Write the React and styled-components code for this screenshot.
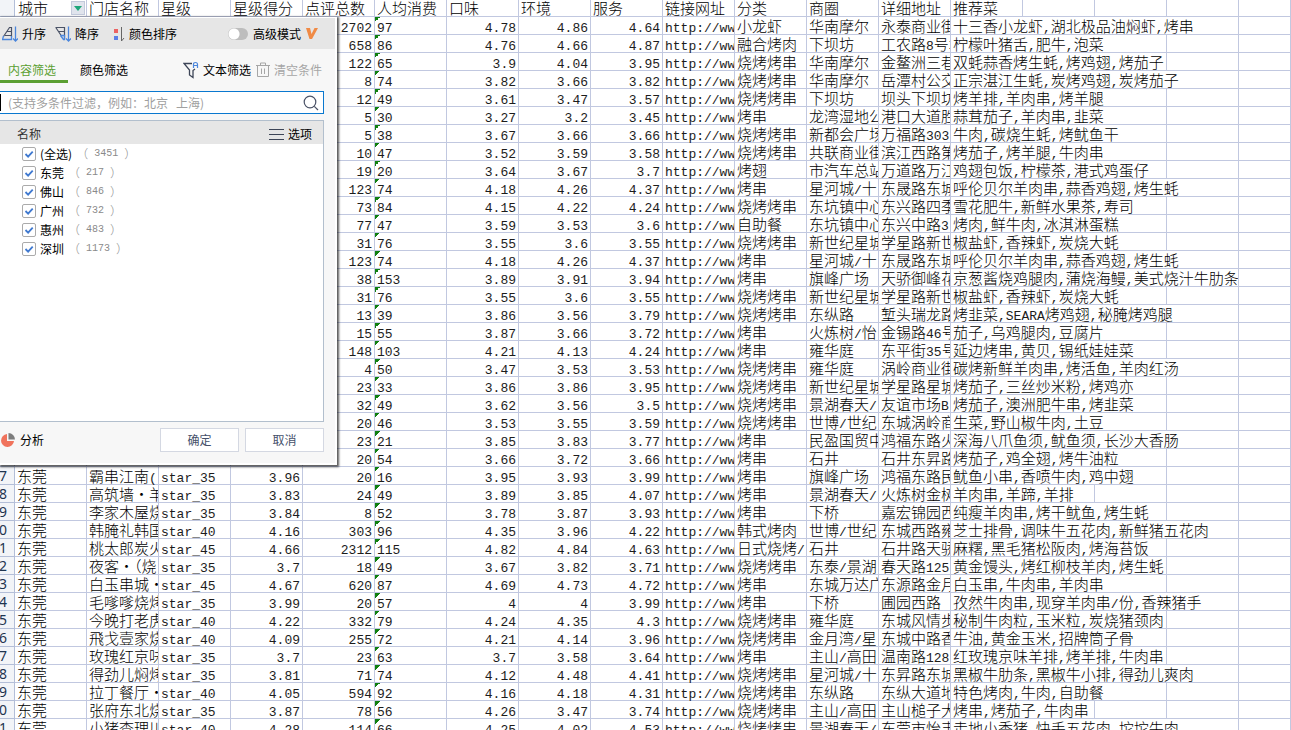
import React, { useState } from "react";
import styled, { createGlobalStyle } from "styled-components";

const GlobalStyle = createGlobalStyle`
  * {
    box-sizing: border-box;
  }
  body {
    margin: 0;
    background: #fff;
    overflow: hidden;
  }
  button, input {
    font: inherit;
    color: inherit;
  }
`;

const Sheet = styled.main`
  position: relative;
  height: 100vh;
  overflow: hidden;
  color: #000;
  font-family: "Noto Sans CJK SC", sans-serif;
  font-size: 15px;
  font-weight: 300;
`;
const Grid = styled.table`
  width: 100%;
  table-layout: fixed;
  border-collapse: separate;
  border-spacing: 0;
`;
const Col = styled.col`
  width: ${props => (props.$head ? "15px" : props.$rest ? "auto" : "72px")};
`;
const Row = styled.tr`
  height: ${props => (props.$first ? "17px" : "18px")};
`;
const cellBase = `
  padding: 0;
  border-right: 1px solid #c1c8e0;
  border-bottom: 1px solid #c1c8e0;
  font-weight: inherit;
  vertical-align: top;
`;
const HeadCell = styled.th`
  ${cellBase}
  text-align: left;
`;
const Cell = styled.td`
  ${cellBase}
  text-align: ${props => (props.$num ? "right" : "left")};
`;
const MarkedCell = styled(Cell)`
  background: linear-gradient(135deg, #108010 50%, transparent 50%) no-repeat
    0 0 / 5px 5px;
`;
const RowHead = styled.th`
  ${cellBase}
  background: #f2f4f8;
  border-color: #b3bed8;
`;
const Content = styled.div`
  height: ${props => (props.$first ? "16px" : "17px")};
  padding: 0 2px;
  line-height: ${props => (props.$first ? "16px" : "17px")};
  white-space: nowrap;
  overflow-x: clip;
  overflow-y: visible;
`;
const RowNumber = styled.div`
  display: flex;
  justify-content: flex-end;
  height: 17px;
  padding-right: 7px;
  color: #1f3550;
  font-family: "Noto Sans", sans-serif;
  font-size: 14px;
  font-weight: 400;
  line-height: 17px;
`;
const Ascii = styled.span`
  color: #1c1c1c;
  font-family: "Liberation Mono", monospace;
  font-size: 13px;
  line-height: 1px;
`;
const FilterHead = styled(Content)`
  display: flex;
  align-items: center;
  justify-content: space-between;
  padding: 0 1px 0 3px;
`;
const FilterButton = styled.button`
  display: flex;
  align-items: center;
  justify-content: center;
  flex: none;
  width: 14px;
  height: 14px;
  padding: 0;
  border: 1px solid #c3cadb;
  background: #e0e4ed;
`;

const Panel = styled.section`
  position: absolute;
  top: 17px;
  left: 0;
  display: flex;
  flex-direction: column;
  width: 337px;
  height: 448px;
  background: #f7f7f7;
  border: 1px solid #fff;
  border-width: 1px 2px 2px 0;
  box-shadow: 1px 1px 2px 1px rgba(0, 0, 0, 0.65);
  font-size: 12px;
  font-weight: 400;
  line-height: 16px;
`;
const Toolbar = styled.div`
  display: flex;
  align-items: center;
  height: 31px;
  flex: none;
  padding: 0 17px 0 2px;
  background: #e6e6e6;
`;
const ToolButton = styled.button`
  display: flex;
  align-items: center;
  gap: 4px;
  padding: 0;
  margin-right: ${props => props.$gap || 0}px;
  border: none;
  background: none;
  color: ${props => (props.$muted ? "#a6a6a6" : "#000")};
  white-space: nowrap;
`;
const Advanced = styled.label`
  display: flex;
  align-items: center;
  gap: 5px;
  margin-left: auto;
`;
const Switch = styled.input`
  appearance: none;
  width: 20px;
  height: 12px;
  margin: 0;
  border-radius: 6px;
  background: radial-gradient(circle at 6px 6px, #fff 5px, #bdbdbd 6px);
`;
const TabBar = styled.div`
  display: flex;
  align-items: center;
  height: 34px;
  flex: none;
  padding-right: 13px;
`;
const Tab = styled.button`
  height: 34px;
  width: ${props => (props.$active ? "68px" : "72px")};
  padding: 10px 0 0 ${props => (props.$active ? "8px" : "12px")};
  border: none;
  border-bottom: 3px solid ${props => (props.$active ? "#5b9f32" : "transparent")};
  background: none;
  color: ${props => (props.$active ? "#5b9f32" : "#000")};
  text-align: left;
`;
const TabTools = styled.div`
  display: flex;
  align-items: center;
  margin-left: auto;
  padding-top: 7px;
`;
const SearchBox = styled.label`
  display: flex;
  align-items: center;
  height: 23px;
  flex: none;
  margin: 8px 11px 0 0;
  padding-right: 4px;
  border: 1px solid #0a78cf;
  border-left: none;
  background: #fff;
`;
const Caret = styled.span`
  width: 1px;
  height: 17px;
  background: #000;
`;
const SearchInput = styled.input`
  flex: 1;
  min-width: 0;
  padding: 0 0 0 7px;
  border: none;
  outline: none;
  background: none;
  &::placeholder {
    color: #a0a0a0;
    opacity: 1;
    white-space: pre;
  }
`;
const ListBox = styled.div`
  flex: 1;
  margin: 6px 11px 0 0;
  border: 1px solid #b2bfcd;
  border-left: none;
  background: #fff;
`;
const ListHead = styled.div`
  display: flex;
  align-items: center;
  justify-content: space-between;
  height: 23px;
  padding: 2px 11px 0 17px;
  background: #e6e6e6;
  color: #333;
`;
const List = styled.ul`
  margin: 0;
  padding: 0 0 0 22px;
  list-style: none;
`;
const Item = styled.label`
  display: flex;
  align-items: center;
  height: 19px;
  gap: 4px;
`;
const Tick = styled.input`
  appearance: none;
  width: 14px;
  height: 14px;
  margin: 0;
  border: 1px solid #ababab;
  border-radius: 2px;
  background: #fff;
  &:checked {
    background: #fff
      url("data:image/svg+xml,%3Csvg xmlns='http://www.w3.org/2000/svg' viewBox='0 0 12 12'%3E%3Cpath d='M2.5 6l2.6 2.6 4.6-5' fill='none' stroke='%23417ad0' stroke-width='1.8'/%3E%3C/svg%3E");
  }
`;
const Count = styled.span`
  display: flex;
  align-items: center;
  gap: 6px;
  color: #8a8a8a;
  font-weight: 300;
`;
const CountNumber = styled.span`
  font-family: "Liberation Mono", monospace;
  font-size: 10px;
`;
const Footer = styled.div`
  display: flex;
  align-items: center;
  height: 41px;
  flex: none;
  gap: 6px;
  padding: 0 11px 6px 0;
`;
const Analyse = styled(ToolButton)`
  margin-right: auto;
`;
const DialogButton = styled.button`
  width: 79px;
  height: 24px;
  padding: 0;
  border: 1px solid #d4d8e2;
  background: #fff;
  color: #45506a;
`;

const Icon = ({ w = 16, h = 18, children }) => (
  <svg width={w} height={h} viewBox={`0 0 ${w} ${h}`} fill="none" aria-hidden="true">
    {children}
  </svg>
);
const AscIcon = () => (
  <Icon>
    <path d="M1.5 11.5L7.500 2.500H9.500V12M5 6.500h4.500M3 10.500h6.500" stroke="#4a5266" strokeWidth="1.200" />
    <path d="M1.500 11l-1 3.500h9V11M13.500 1.500v14.500M11 13.500l2.500 2.500 2.500-2.500" stroke="#4b86dc" strokeWidth="1.300" />
  </Icon>
);
const DescIcon = () => (
  <Icon>
    <path d="M.5 2.500h9V14M.8 2.500l6 9M3.500 6.500h6" stroke="#4a5266" strokeWidth="1.200" />
    <path d="M5.500 10.500h4v4h-1l-3-4M13.500 1.500v14.500M11 13.500l2.500 2.500 2.500-2.500" stroke="#4b86dc" strokeWidth="1.300" />
  </Icon>
);
const ColorIcon = () => (
  <Icon w={12}>
    <path d="M1 4h4v4H1z" fill="#ec6262" />
    <path d="M1 11h4v4H1z" fill="#5b7fe6" />
    <path d="M8.500 2v14l2.500-3" stroke="#666" />
  </Icon>
);
const VipIcon = () => (
  <Icon w={12} h={12}>
    <path d="M0 0h4l1.500 6L8.500 0H12L6 11H3.500z" fill="#f08a45" />
  </Icon>
);
const FunnelIcon = () => (
  <Icon>
    <path d="M9 2.500H1l5.500 6.500v5l3.500 2.500V9.500l2-1.500" stroke="#3d4557" strokeWidth="1.300" />
    <path d="M10.500 7V3.500q0-2 2-2t2 2V7M10.500 4.500h4" stroke="#4b86dc" strokeWidth="1.200" />
  </Icon>
);
const TrashIcon = () => (
  <Icon w={14} h={16}>
    <path d="M0 3.500h14M4.500 3V1h5v2M1.500 4v10.500h11V4M5.500 6.500v5.500M8.500 6.500v5.500" stroke="#a6a6a6" />
  </Icon>
);
const SearchIcon = () => (
  <Icon w={16} h={16}>
    <circle cx="7" cy="7" r="5.800" stroke="#4a5266" strokeWidth="1.200" />
    <path d="M11.300 11.300L15 15" stroke="#4a5266" strokeWidth="1.200" />
  </Icon>
);
const MenuIcon = () => (
  <Icon w={15} h={12}>
    <path d="M0 1.500h15M0 6.500h15M0 11.500h15" stroke="#3d4557" />
  </Icon>
);
const PieIcon = () => (
  <Icon w={16} h={16}>
    <path d="M7 2v7h7A6.500 6.500 0 1 1 7 2z" fill="#f0735c" />
    <path d="M8.500 1A6.500 6.500 0 0 1 15 7.500H8.500z" fill="#7d7d7d" />
  </Icon>
);
const ArrowIcon = () => (
  <Icon w={8} h={5}>
    <path d="M0 0h8L4 5z" fill="#1fa67a" />
  </Icon>
);

const headers = ["门店名称", "星级", "星级得分", "点评总数", "人均消费", "口味", "环境", "服务", "链接网址", "分类", "商圈", "详细地址", "推荐菜"];

// store, stars, score, reviews, price, taste, setting, service, type, area, address, dishes
const rows = `
|||2702|97|4.78|4.86|4.64|小龙虾|华南摩尔|永泰商业街|十三香小龙虾,湖北极品油焖虾,烤串
|||658|86|4.76|4.66|4.87|融合烤肉|下坝坊|工农路8号坝|柠檬叶猪舌,肥牛,泡菜
|||122|65|3.9|4.04|3.95|烧烤烤串|华南摩尔|金鳌洲三巷|双蚝蒜香烤生蚝,烤鸡翅,烤茄子
|||8|74|3.82|3.66|3.82|烧烤烤串|华南摩尔|岳潭村公交|正宗湛江生蚝,炭烤鸡翅,炭烤茄子
|||12|49|3.61|3.47|3.57|烧烤烤串|下坝坊|坝头下坝坊|烤羊排,羊肉串,烤羊腿
|||5|30|3.27|3.2|3.45|烤串|龙湾湿地公|港口大道胜|蒜茸茄子,羊肉串,韭菜
|||5|38|3.67|3.66|3.66|烧烤烤串|新都会广场|万福路303|牛肉,碳烧生蚝,烤鱿鱼干
|||10|47|3.52|3.59|3.58|烧烤烤串|共联商业街|滨江西路第|烤茄子,烤羊腿,牛肉串
|||19|20|3.64|3.67|3.7|烤翅|市汽车总站|万道路万江|鸡翅包饭,柠檬茶,港式鸡蛋仔
|||123|74|4.18|4.26|4.37|烤串|星河城/十|东晟路东城|呼伦贝尔羊肉串,蒜香鸡翅,烤生蚝
|||73|84|4.15|4.22|4.24|烧烤烤串|东坑镇中心|东兴路四季|雪花肥牛,新鲜水果茶,寿司
|||77|47|3.59|3.53|3.6|自助餐|东坑镇中心|东兴中路3|烤肉,鲜牛肉,冰淇淋蛋糕
|||31|76|3.55|3.6|3.55|烧烤烤串|新世纪星城|学星路新世|椒盐虾,香辣虾,炭烧大蚝
|||123|74|4.18|4.26|4.37|烤串|星河城/十|东晟路东城|呼伦贝尔羊肉串,蒜香鸡翅,烤生蚝
|||38|153|3.89|3.91|3.94|烤串|旗峰广场|天骄御峰花|京葱酱烧鸡腿肉,蒲烧海鳗,美式烧汁牛肋条
|||31|76|3.55|3.6|3.55|烧烤烤串|新世纪星城|学星路新世|椒盐虾,香辣虾,炭烧大蚝
|||13|39|3.86|3.56|3.79|烧烤烤串|东纵路|堑头瑞龙路|烤韭菜,SEARA烤鸡翅,秘腌烤鸡腿
|||15|55|3.87|3.66|3.72|烤串|火炼树/怡|金锡路46号|茄子,乌鸡腿肉,豆腐片
|||148|103|4.21|4.13|4.24|烤串|雍华庭|东平街35号|延边烤串,黄贝,锡纸娃娃菜
|||4|50|3.47|3.53|3.53|烧烤烤串|雍华庭|涡岭商业街|碳烤新鲜羊肉串,烤活鱼,羊肉红汤
|||23|33|3.86|3.86|3.95|烧烤烤串|新世纪星城|学星路星城|烤茄子,三丝炒米粉,烤鸡亦
|||32|49|3.62|3.56|3.5|烧烤烤串|景湖春天/|友谊市场B|烤茄子,澳洲肥牛串,烤韭菜
|||20|46|3.53|3.55|3.59|烧烤烤串|世博/世纪|东城涡岭商|生菜,野山椒牛肉,土豆
|||23|21|3.85|3.83|3.77|烤串|民盈国贸中|鸿福东路火|深海八爪鱼须,鱿鱼须,长沙大香肠
|||20|54|3.66|3.72|3.66|烤串|石井|石井东昇路|烤茄子,鸡全翅,烤牛油粒
霸串江南(|star_35|3.96|20|16|3.95|3.93|3.99|烤串|旗峰广场|鸿福东路民|鱿鱼小串,香喷牛肉,鸡中翅
高筑墙•羊|star_35|3.83|24|49|3.89|3.85|4.07|烤串|景湖春天/|火炼树金树|羊肉串,羊蹄,羊排
李家木屋烧|star_35|3.84|8|52|3.78|3.87|3.93|烤串|下桥|嘉宏锦园西|纯瘦羊肉串,烤干鱿鱼,烤生蚝
韩腌礼韩国|star_40|4.16|303|96|4.35|3.96|4.22|韩式烤肉|世博/世纪|东城西路雍|芝士排骨,调味牛五花肉,新鲜猪五花肉
桃太郎炭火|star_45|4.66|2312|115|4.82|4.84|4.63|日式烧烤/|石井|石井路天骄|麻糬,黑毛猪松阪肉,烤海苔饭
夜客·（烧|star_35|3.7|18|49|3.67|3.82|3.71|烧烤烤串|东泰/景湖|春天路125|黄金馒头,烤红柳枝羊肉,烤生蚝
白玉串城·|star_45|4.67|620|87|4.69|4.73|4.72|烤串|东城万达广|东源路金月|白玉串,牛肉串,羊肉串
毛嗲嗲烧烤|star_35|3.99|20|57|4|4|3.99|烤串|下桥|圃园西路|孜然牛肉串,现穿羊肉串/份,香辣猪手
今晚打老虎|star_40|4.22|332|79|4.24|4.35|4.3|烧烤烤串|雍华庭|东城风情步|秘制牛肉粒,玉米粒,炭烧猪颈肉
飛戈壹家烧|star_40|4.09|255|72|4.21|4.14|3.96|烧烤烤串|金月湾/星|东城中路香|牛油,黄金玉米,招牌筒子骨
玫瑰红京味|star_35|3.7|23|63|3.7|3.58|3.64|烤串|主山/高田|温南路128|红玫瑰京味羊排,烤羊排,牛肉串
得劲儿焖烤|star_35|3.81|71|74|4.12|4.48|4.41|烧烤烤串|星河城/十|东昇路东城|黑椒牛肋条,黑椒牛小排,得劲儿爽肉
拉丁餐厅·|star_40|4.05|594|92|4.16|4.18|4.31|烧烤烤串|东纵路|东纵大道地|特色烤肉,牛肉,自助餐
张府东北烧|star_35|3.87|78|56|4.26|3.47|3.74|烧烤烤串|主山/高田|主山槌子大|烤串,烤茄子,牛肉串
小猪查理川|star_40|4.28|114|66|4.25|4.02|4.53|烧烤烤串|景湖春天/|东莞市怡丰|走地小香猪,快手五花肉,坨坨牛肉`
  .trim()
  .split("\n")
  .map(line => line.split("|"));

const cities = [
  ["(全选)", 3451],
  ["东莞", 217],
  ["佛山", 846],
  ["广州", 732],
  ["惠州", 483],
  ["深圳", 1173]
];

const Text = ({ children }) => (
  <Content>
    {children
      .split(/([\x20-\x7e]+)/)
      .map((part, i) => (i % 2 ? <Ascii key={i}>{part}</Ascii> : part))}
  </Content>
);

// long dish lists run over the empty columns to their right
const spanOf = text => {
  const width = [...text].reduce((sum, c) => sum + (c < "\x7f" ? 7.5 : 15), 3);
  return Math.ceil(width / 72);
};

const SheetRow = ({ values, number }) => {
  const dishes = values[11];
  const span = spanOf(dishes);
  return (
    <Row>
      <RowHead scope="row">
        <RowNumber>{number}</RowNumber>
      </RowHead>
      <Cell>
        <Text>{values[0] && "东莞"}</Text>
      </Cell>
      {values.slice(0, 11).map((value, i) => {
        const Box = i === 4 ? MarkedCell : Cell;
        return (
          <React.Fragment key={i}>
            {i === 8 && (
              <Cell>
                <Text>http://www</Text>
              </Cell>
            )}
            <Box $num={[2, 3, 5, 6, 7].includes(i)}>
              <Text>{value}</Text>
            </Box>
          </React.Fragment>
        );
      })}
      <Cell colSpan={span}>
        <Text>{dishes}</Text>
      </Cell>
      {Array.from({ length: 5 - span }, (_, i) => (
        <Cell key={i} />
      ))}
    </Row>
  );
};

const FilterPanel = () => {
  const [checked, setChecked] = useState(cities.map(() => true));
  const toggle = index =>
    setChecked(
      index === 0
        ? checked.map(() => !checked[0])
        : checked.map((value, i) => (i === index ? !value : value))
    );
  return (
    <Panel>
      <Toolbar>
        <ToolButton $gap={9}>
          <AscIcon />
          升序
        </ToolButton>
        <ToolButton $gap={14}>
          <DescIcon />
          降序
        </ToolButton>
        <ToolButton>
          <ColorIcon />
          颜色排序
        </ToolButton>
        <Advanced>
          <Switch type="checkbox" role="switch" />
          高级模式
          <VipIcon />
        </Advanced>
      </Toolbar>
      <TabBar>
        <Tab $active>内容筛选</Tab>
        <Tab>颜色筛选</Tab>
        <TabTools>
          <ToolButton $gap={5}>
            <FunnelIcon />
            文本筛选
          </ToolButton>
          <ToolButton $muted>
            <TrashIcon />
            清空条件
          </ToolButton>
        </TabTools>
      </TabBar>
      <SearchBox>
        <Caret />
        <SearchInput
          aria-label="搜索"
          placeholder="(支持多条件过滤，例如：北京   上海)"
        />
        <SearchIcon />
      </SearchBox>
      <ListBox>
        <ListHead>
          名称
          <ToolButton>
            <MenuIcon />
            选项
          </ToolButton>
        </ListHead>
        <List>
          {cities.map(([name, count], i) => (
            <li key={name}>
              <Item>
                <Tick type="checkbox" checked={checked[i]} onChange={() => toggle(i)} />
                {name}
                <Count>
                  （<CountNumber>{count}</CountNumber>）
                </Count>
              </Item>
            </li>
          ))}
        </List>
      </ListBox>
      <Footer>
        <Analyse>
          <PieIcon />
          分析
        </Analyse>
        <DialogButton>确定</DialogButton>
        <DialogButton>取消</DialogButton>
      </Footer>
    </Panel>
  );
};

const App = () => (
  <Sheet>
    <GlobalStyle />
    <Grid>
      <colgroup>
        <Col $head />
        {Array.from({ length: 17 }, (_, i) => (
          <Col key={i} />
        ))}
        <Col $rest />
      </colgroup>
      <thead>
        <Row $first>
          <RowHead />
          <HeadCell scope="col">
            <FilterHead $first>
              城市
              <FilterButton aria-label="筛选">
                <ArrowIcon />
              </FilterButton>
            </FilterHead>
          </HeadCell>
          {headers.map(title => (
            <HeadCell key={title} scope="col">
              <Content $first>{title}</Content>
            </HeadCell>
          ))}
          {[1, 2, 3, 4].map(i => (
            <Cell key={i} />
          ))}
        </Row>
      </thead>
      <tbody>
        {rows.map((values, i) => (
          <SheetRow key={i} values={values} number={i + 2} />
        ))}
      </tbody>
    </Grid>
    <FilterPanel />
  </Sheet>
);

export default App;
